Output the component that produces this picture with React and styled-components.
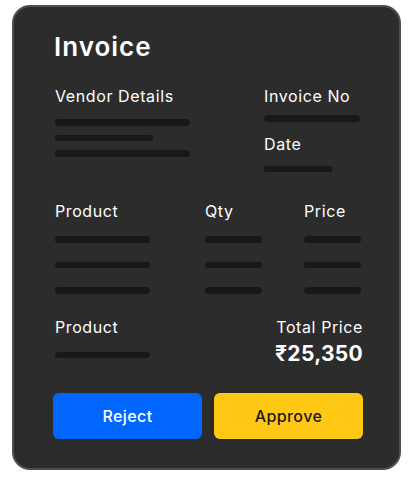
import styled, { createGlobalStyle } from "styled-components";

const GlobalStyle = createGlobalStyle`
    * {
        box-sizing: border-box;
    }
    body {
        margin: 0;
        background-color: #ffffff;
        font-family: 'Inter', 'Noto Sans', sans-serif;
    }
`

const itemRows = [
    { product: 95, qty: 57, price: 57 },
    { product: 95, qty: 57, price: 57 },
    { product: 95, qty: 57, price: 57 },
]

export default function App() {
    return (
        <>
            <GlobalStyle />
            <Page>
                <Card>
                    <Title>Invoice</Title>

                    <TopSection>
                        <div>
                            <Label>Vendor Details</Label>
                            <LineStack gap={9} top={13}>
                                <Line width={135} />
                                <Line width={98} />
                                <Line width={135} />
                            </LineStack>
                        </div>
                        <div>
                            <Label>Invoice No</Label>
                            <LineStack top={9}>
                                <Line width={96} />
                            </LineStack>
                            <Label top={12}>Date</Label>
                            <LineStack top={12}>
                                <Line width={68} />
                            </LineStack>
                        </div>
                    </TopSection>

                    <ItemsTable>
                        <Label>Product</Label>
                        <Label>Qty</Label>
                        <Label>Price</Label>
                        {itemRows.map((row, i) => (
                            <RowCells key={i} first={i === 0}>
                                <Line width={row.product} />
                                <Line width={row.qty} />
                                <Line width={row.price} />
                            </RowCells>
                        ))}
                    </ItemsTable>

                    <Summary>
                        <div>
                            <Label>Product</Label>
                            <LineStack top={15}>
                                <Line width={95} />
                            </LineStack>
                        </div>
                        <TotalBlock>
                            <Label>Total Price</Label>
                            <Amount>₹25,350</Amount>
                        </TotalBlock>
                    </Summary>

                    <Actions>
                        <ActionButton variant="reject">Reject</ActionButton>
                        <ActionButton variant="approve">Approve</ActionButton>
                    </Actions>
                </Card>
            </Page>
        </>
    )
}

const Page = styled.div`
    width: 413px;
    height: 477px;
    padding: 5px 0 0 12px;
`
const Card = styled.div`
    width: 389px;
    height: 465px;
    background-color: #2c2c2c;
    border: 2px solid #4f4f4f;
    border-radius: 18px;
    padding: 24px 36px 0 41px;
    display: flex;
    flex-direction: column;
    color: #ffffff;
`
const Title = styled.h1`
    margin: 0 0 0 -1px;
    font-size: 26px;
    line-height: 32px;
    font-weight: 600;
    letter-spacing: 1px;
`
const Label = styled.div`
    font-size: 16px;
    line-height: 20px;
    font-weight: 400;
    letter-spacing: 0.6px;
    margin-top: ${({ top }) => top || 0}px;
    white-space: nowrap;
`
const LineStack = styled.div`
    display: flex;
    flex-direction: column;
    gap: ${({ gap }) => gap || 0}px;
    margin-top: ${({ top }) => top || 0}px;
`
const Line = styled.div`
    width: ${({ width }) => width}px;
    height: 6.5px;
    border-radius: 4px;
    background-color: #181818;
`
const TopSection = styled.div`
    display: grid;
    grid-template-columns: 209px 1fr;
    margin-top: 23px;
`
const ItemsTable = styled.div`
    display: grid;
    grid-template-columns: 150px 99px 1fr;
    margin-top: 29px;
`
const RowCells = styled.div`
    display: contents;
    & > div {
        margin-top: ${({ first }) => (first ? 15 : 19)}px;
    }
`
const Summary = styled.div`
    display: flex;
    justify-content: space-between;
    margin-top: 23px;
`
const TotalBlock = styled.div`
    display: flex;
    flex-direction: column;
    align-items: flex-end;
`
const Amount = styled.div`
    font-size: 21px;
    line-height: 26px;
    font-weight: 700;
    letter-spacing: 0.3px;
    margin-top: 4px;
`
const Actions = styled.div`
    display: flex;
    gap: 12px;
    margin-top: 26px;
    margin-left: -2px;
`
const ActionButton = styled.button`
    width: 150px;
    height: 46px;
    border: none;
    border-radius: 6px;
    font-family: 'Inter', 'Noto Sans', sans-serif;
    font-size: 16px;
    font-weight: 500;
    letter-spacing: 0.4px;
    background-color: ${({ variant }) => (variant === "reject" ? "#0066ff" : "#ffc815")};
    color: ${({ variant }) => (variant === "reject" ? "#ffffff" : "#1a1a1a")};
`
